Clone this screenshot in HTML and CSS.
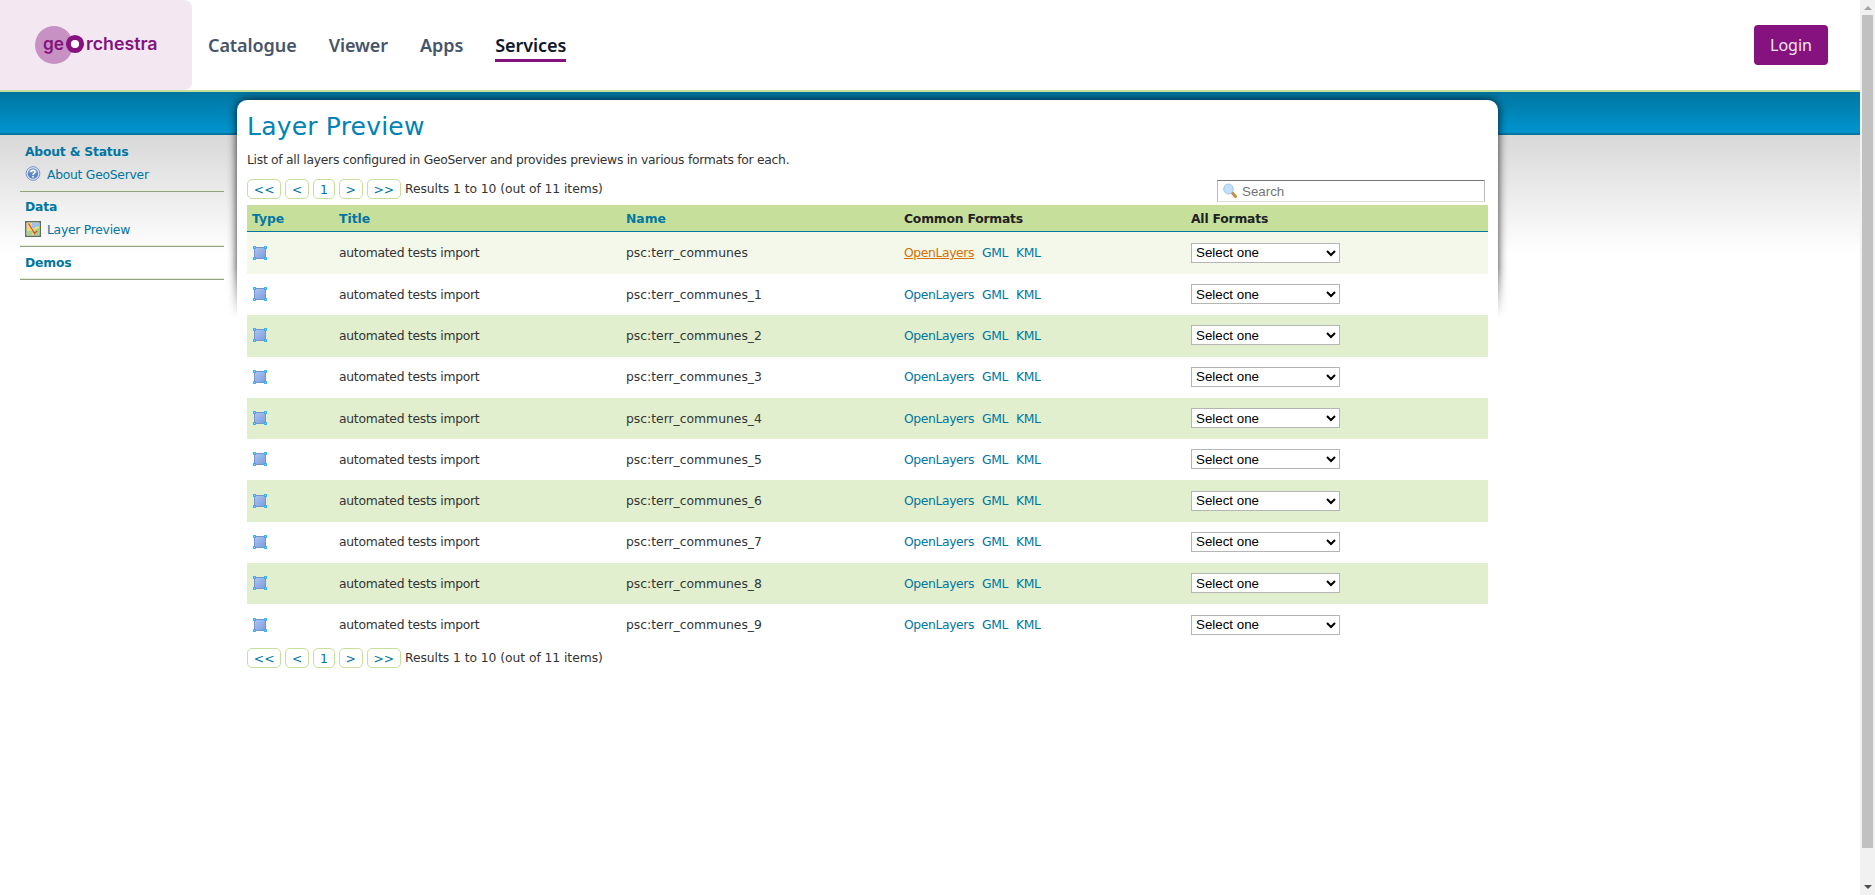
FILE: index.html
```
<!DOCTYPE html>
<html lang="en">
<head>
<meta charset="utf-8">
<title>GeoServer: Layer Preview</title>
<link rel="stylesheet" href="styles.css">
</head>
<body>
<svg class="defs" width="0" height="0">
  <defs>
    <linearGradient id="poly" x1="0" y1="0" x2="1" y2="1"><stop offset="0" stop-color="#adc6f0"/><stop offset="1" stop-color="#7c9bdc"/></linearGradient>
    <symbol id="vector" viewBox="0 0 16 16">
      <rect x="2.5" y="2.5" width="11" height="11" fill="url(#poly)" stroke="#7893cc"/>
      <g fill="#2aabf8"><rect x="1" y="1" width="3" height="3" rx=".8"/><rect x="12" y="1" width="3" height="3" rx=".8"/><rect x="1" y="12" width="3" height="3" rx=".8"/><rect x="12" y="12" width="3" height="3" rx=".8"/></g>
      <path d="M2 2h1v1H2zM13 2h1v1h-1zM2 13h1v1H2zM13 13h1v1h-1z" fill="#a5dcfa"/>
    </symbol>
  </defs>
</svg>
<div class="app">
  <div class="page">
    <header class="topbar">
      <a class="brand">
        <svg width="140" height="44" viewBox="0 0 140 44">
          <circle cx="19" cy="22" r="19" fill="#c792c3"/>
          <text class="logo-text" x="8" y="26.5" textLength="21" lengthAdjust="spacingAndGlyphs">ge</text>
          <circle cx="40" cy="21" r="6.6" fill="#fff" stroke="#85127e" stroke-width="5"/>
          <text class="logo-text" x="51" y="26.5" textLength="71.5" lengthAdjust="spacingAndGlyphs">rchestra</text>
        </svg>
      </a>
      <nav class="nav"><a>Catalogue</a><a>Viewer</a><a>Apps</a><a class="active">Services</a></nav>
      <a class="login">Login</a>
    </header>
    <div class="band"></div>
    <div class="body">
      <aside class="sidebar">
        <section><h3>About &amp; Status</h3>
          <a><svg width="16" height="16" viewBox="0 0 16 16"><circle cx="8" cy="7.5" r="6.8" fill="#e4edf9" stroke="#7191c4"/><circle cx="8" cy="7.5" r="5.3" fill="#5f88c6"/><path d="M3.5 6.5a4.6 4 0 0 1 9 0z" fill="#92b1de"/><path d="M6 6C6 3.6 10 3.6 10 6 10 7.5 8 7.4 8 8.9M8 10v1.6" fill="none" stroke="#fff" stroke-width="1.6"/></svg>About GeoServer</a></section>
        <section><h3>Data</h3>
          <a><svg width="16" height="16" viewBox="0 0 16 16"><rect x=".75" y=".75" width="14.5" height="14.5" fill="#fff" stroke="#5f6f58" stroke-width="1.5"/><path d="M2 2h5v12H2z" fill="#f0d873"/><path d="M7 2h7v5H7z" fill="#9dc2ee"/><path d="M8 7h6v7H8zM2 10h6v4H2z" fill="#a5d38b"/><path d="M14 6l-5 2-1 6" fill="none" stroke="#f6e76a" stroke-width="1.4"/><path d="M3.5 2.5L7 8l3 5.5M9.5 12l3-2" fill="none" stroke="#e9452e" stroke-width="1.3"/></svg>Layer Preview</a></section>
        <section><h3>Demos</h3></section>
      </aside>
      <main class="panel">
        <div class="shadow"><div></div></div>
        <h1>Layer Preview</h1>
        <p class="intro">List of all layers configured in GeoServer and provides previews in various formats for each.</p>
        <div class="tools">
          <div class="pager"><a>&lt;&lt;</a><a>&lt;</a><a>1</a><a>&gt;</a><a>&gt;&gt;</a><span>Results 1 to 10 (out of 11 items)</span></div>
          <label class="search"><svg width="16" height="16" viewBox="0 0 16 16"><path d="M10 9.5l3.5 4" stroke="#c98a4a" stroke-width="3" stroke-linecap="round"/><ellipse cx="6.5" cy="6" rx="4.8" ry="5" fill="#c3e0fa" stroke="#a5c4e6"/></svg><input type="text" placeholder="Search"></label>
        </div>
        <table>
          <colgroup><col class="c1"><col class="c2"><col class="c3"><col class="c4"><col class="c5"></colgroup>
          <thead><tr><th><a>Type</a></th><th><a>Title</a></th><th><a>Name</a></th><th>Common Formats</th><th>All Formats</th></tr></thead>
          <tbody id="rows"></tbody>
        </table>
        <div class="pager bottom"><a>&lt;&lt;</a><a>&lt;</a><a>1</a><a>&gt;</a><a>&gt;&gt;</a><span>Results 1 to 10 (out of 11 items)</span></div>
      </main>
    </div>
  </div>
  <div class="scrollbar"><i class="up"></i><div class="thumb"></div><i class="down"></i></div>
</div>
<script src="rows.js"></script>
</body>
</html>
```
FILE: rows.js
```
const rows = document.getElementById('rows');
for (let i = 0; i < 10; i++) {
  const name = 'psc:terr_communes' + (i ? '_' + i : '');
  rows.insertAdjacentHTML('beforeend', `<tr>
    <td><svg class="type" width="16" height="16"><use href="#vector"/></svg></td>
    <td class="title">automated tests import</td><td>${name}</td>
    <td><span class="formats"><a>OpenLayers</a><a>GML</a><a>KML</a></span></td>
    <td><select><option>Select one</option></select></td></tr>`);
}
```
FILE: styles.css
```
* { box-sizing: border-box; }
body { margin: 0; font: 12.35px/18px "DejaVu Sans", Verdana, sans-serif; color: #333; background: #fff; }
.defs { position: absolute; }
a { color: #0076a1; text-decoration: none; }
.app { display: flex; height: 895px; overflow: hidden; }
.page { flex: 1; min-width: 0; }
.topbar { display: flex; align-items: center; height: 90px; padding-right: 32px; font-family: "Noto Sans", sans-serif; }
.brand { display: flex; align-items: center; width: 192px; height: 90px; padding-left: 35px; background: #f3e7f1; border-radius: 0 8px 8px 0; }
.logo-text { font: 600 17px Inter, sans-serif; fill: #85127e; }
.nav { display: flex; flex: 1; gap: 32px; padding: 2px 0 0 16px; }
.nav a { font-size: 18px; font-weight: 600; letter-spacing: -.08px; line-height: 28px; color: #475569; border-bottom: 3px solid transparent; }
.nav a.active { color: #0f172a; border-color: #85127e; }
.login { width: 74px; height: 40px; border-radius: 4px; background: #85127e; color: #f3e7f1; font-size: 16px; line-height: 40px; text-align: center; }
.band { height: 45px; border-top: 2px solid #c6e09b; border-bottom: 2px solid #0076a1; background: linear-gradient(#0076a1, #0092cb 90%); }
.body { position: relative; z-index: 0; display: flex; height: 760px; background: linear-gradient(#d8d8d8, #fff 119px); }
.sidebar { width: 237px; padding: 7px 13px 0 20px; }
.sidebar section { height: 55px; padding: 6px 5px 0; border-bottom: 1px solid #96a087; box-shadow: inset 0 -1px #e4efd2; }
.sidebar section:first-child { height: 50px; padding-top: 1px; }
.sidebar section:last-child { height: 33px; padding-top: 7px; }
.sidebar h3 { margin: 0; font-size: 12.35px; line-height: 18px; letter-spacing: -.2px; color: #0076a1; }
.sidebar a { display: flex; align-items: center; gap: 6px; height: 27px; letter-spacing: -.26px; }
.sidebar svg { margin-top: -2px; }
.panel { position: relative; z-index: 0; width: 1261px; height: 640px; margin-top: -35px; padding: 10px; }
.panel::after { content: ""; position: absolute; z-index: -1; inset: 0; border-radius: 10px 10px 0 0; background: #fff; }
.shadow { position: absolute; z-index: -1; top: -8px; left: -12px; right: -12px; height: 226px; padding: 8px 12px 0; overflow: hidden; -webkit-mask-image: linear-gradient(#000 175px, transparent); mask-image: linear-gradient(#000 175px, transparent); }
.shadow div { height: 250px; border-radius: 10px; box-shadow: 0 0 10px rgba(0, 0, 0, .85); }
h1 { margin: 0; font-size: 25px; line-height: 33px; font-weight: 400; letter-spacing: .2px; color: #0083b5; }
.intro { margin: 8px 0 0; letter-spacing: -.28px; }
.tools { display: flex; justify-content: space-between; height: 36px; padding: 10px 3px 0 0; }
.pager { display: flex; gap: 4px; height: 20px; line-height: 20px; letter-spacing: -.06px; }
.pager a { padding: 0 5.85px; line-height: 20px; border: 1px solid #c6e09b; border-radius: 5px; }
.search { display: flex; align-items: center; width: 268px; height: 22px; margin-top: 1px; padding: 0 4px; gap: 4px; border: 1px solid; border-color: #777 #bbb #ddd; }
.search svg { margin-top: -1px; }
.search input { border: 0; padding: 0; width: 230px; outline: 0; font: 13.33px "Liberation Sans", sans-serif; }
table { width: 1241px; table-layout: fixed; border-collapse: separate; border-spacing: 0; }
.c1 { width: 87px; } .c2 { width: 287px; } .c3 { width: 278px; } .c4 { width: 287px; } .c5 { width: 302px; }
th { height: 27px; padding: 1px 5px 0; text-align: left; background: #c6e09b; border-bottom: 1px solid #0076a1; color: #222; }
th:nth-child(n+4) { letter-spacing: -.2px; }
td { height: 41.3px; padding: 0 5px 1px; }
td:nth-child(2), td:nth-child(3), td:nth-child(4) { padding-bottom: 0; }
td.title { letter-spacing: -.27px; }
tbody tr:nth-child(odd) td { background: #e1efce; }
tbody tr:first-child td { background: #f4f8eb; height: 42px; }
.type { display: block; }
.formats { display: flex; gap: 8px; letter-spacing: -.38px; }
tr:first-child .formats a:first-child { color: #d56f00; text-decoration: underline; }
select { display: block; width: 149px; height: 20px; padding: 0; border: 1px solid #b5b5b5; border-radius: 0; background: #fff; font: 13.33px "Liberation Sans", sans-serif; color: #000; }
.bottom { margin-top: 2px; }
.scrollbar { display: flex; flex-direction: column; width: 15px; background: #f1f1f1; }
.scrollbar i { width: 0; height: 0; border: 4px solid transparent; }
.scrollbar .up { margin: 2px 3.5px 5px; border-bottom-color: #a3a3a3; }
.thumb { height: 833px; margin: 0 2px; background: #c1c1c1; }
.scrollbar .down { margin: auto 3.5px 2px; border-top-color: #505050; }
```
